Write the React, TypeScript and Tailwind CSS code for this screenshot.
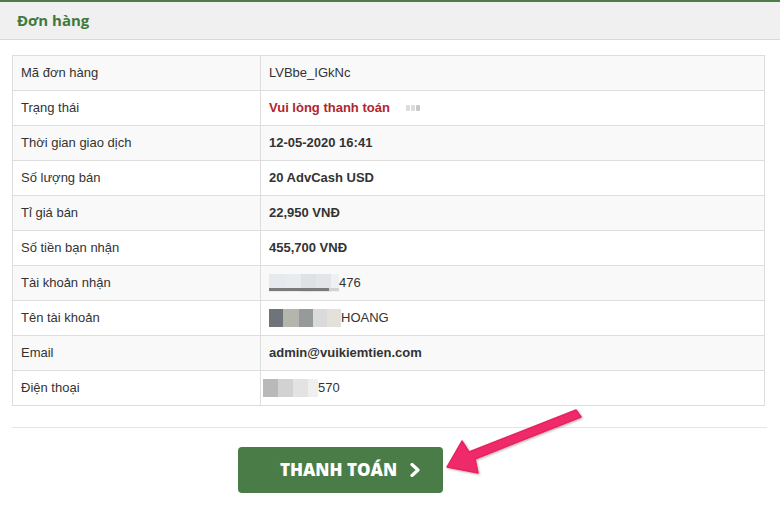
import React from 'react'

type Row = { label: string; value: React.ReactNode }

const Blur = ({ w, shades }: { w: number[]; shades: string[] }) => (
  <span className="inline-flex items-center h-[18px] align-middle">
    {w.map((width, i) => (
      <span key={i} className="h-[18px] inline-block" style={{ width, background: shades[i] }} />
    ))}
  </span>
)

const App: React.FC = () => {
  const rows: Row[] = [
    { label: 'Mã đơn hàng', value: <span className="font-normal">LVBbe_IGkNc</span> },
    {
      label: 'Trạng thái',
      value: (
        <span className="flex items-center">
          <span className="text-[#b0262b]">Vui lòng thanh toán</span>
          <span className="ml-4 flex gap-[1px]">
            <span className="w-[4px] h-[6px] bg-[#dcdcdc] rounded-[1px]" />
            <span className="w-[4px] h-[6px] bg-[#dcdcdc] rounded-[1px]" />
            <span className="w-[4px] h-[6px] bg-[#c8c8c8] rounded-[1px]" />
          </span>
        </span>
      )
    },
    { label: 'Thời gian giao dịch', value: '12-05-2020 16:41' },
    { label: 'Số lượng bán', value: '20 AdvCash USD' },
    { label: 'Tỉ giá bán', value: '22,950 VNĐ' },
    { label: 'Số tiền bạn nhận', value: '455,700 VNĐ' },
    {
      label: 'Tài khoản nhận',
      value: (
        <span className="flex items-center font-normal">
          <span className="relative inline-flex">
            <Blur w={[16, 16, 15, 15, 8]} shades={['#e6eaee', '#e9ecef', '#dfe2e5', '#e3e5e8', '#eef0f2']} />
            <span className="absolute left-0 bottom-[1px] w-[60px] h-[3px] bg-[#7a7a7a]" />
            <span className="absolute left-[60px] bottom-[1px] w-[10px] h-[3px] bg-[#cfd3d8]" />
          </span>
          <span>476</span>
        </span>
      )
    },
    {
      label: 'Tên tài khoản',
      value: (
        <span className="flex items-center font-normal">
          <Blur w={[14, 16, 14, 14, 14]} shades={['#6e7479', '#b4b6ae', '#979a9a', '#dadadb', '#e4e1db']} />
          <span>HOANG</span>
        </span>
      )
    },
    { label: 'Email', value: 'admin@vuikiemtien.com' },
    {
      label: 'Điện thoại',
      value: (
        <span className="flex items-center font-normal -ml-[6px]">
          <Blur w={[15, 15, 15, 10]} shades={['#b9b9b9', '#d2d2d2', '#e3e3e3', '#efefef']} />
          <span>570</span>
        </span>
      )
    }
  ]

  return (
    <div className="w-[780px] h-[510px] bg-white relative overflow-hidden" style={{ fontFamily: '"Liberation Sans", Arial, sans-serif' }}>
      {/* Header */}
      <div className="border-t-2 border-[#4d7d4b] bg-[#f0f0f0] border-b border-b-[#d9d9d9] h-[40px] flex items-center px-[17px]">
        <h2 className="text-[15px] font-bold text-[#3f7a3d]" style={{ fontFamily: '"Open Sans", sans-serif' }}>
          Đơn hàng
        </h2>
      </div>

      <div className="px-[12px] pt-[15px] w-[768px]">
        <table className="w-[753px] border-collapse text-[13px] text-[#333]">
          <tbody>
            {rows.map((row, i) => (
              <tr key={i} className={i % 2 === 0 ? 'bg-[#f9f9f9]' : 'bg-white'}>
                <td className="w-[248px] h-[35px] border border-[#dddddd] pl-[8px]">{row.label}</td>
                <td className="h-[35px] border border-[#dddddd] pl-[8px] font-bold">{row.value}</td>
              </tr>
            ))}
          </tbody>
        </table>

        <div className="mt-[21px] border-t border-[#e5e5e5] w-[755px]" />

        <div className="flex justify-center pt-[19px] pr-[8px]">
          <button
            className="ml-[-79px] w-[205px] h-[46px] rounded-[4px] bg-[#4a7c48] text-white text-[17px] font-extrabold flex items-center justify-center gap-[12px] pl-[20px]"
            style={{ fontFamily: '"Open Sans", sans-serif' }}
          >
            THANH TOÁN
            <svg width="12" height="14" viewBox="0 0 12 14" fill="none">
              <path d="M3 1.5 L9 7 L3 12.5" stroke="white" strokeWidth="3.2" strokeLinecap="round" strokeLinejoin="round" />
            </svg>
          </button>
        </div>
      </div>

      {/* Pink arrow annotation */}
      <svg className="absolute left-0 top-0 pointer-events-none" width="780" height="510">
        <defs>
          <filter id="sh" x="-10%" y="-10%" width="120%" height="120%">
            <feDropShadow dx="1" dy="1" stdDeviation="1.2" floodColor="#000" floodOpacity="0.3" />
          </filter>
        </defs>
        <path
          d="M576 410 L581 417 L475 459 L478 473 L447 467 L462 441 L469 452 Z"
          fill="#ef2a6a"
          stroke="#e8225f"
          strokeWidth="1.5"
          strokeLinejoin="round"
          filter="url(#sh)"
        />
      </svg>
    </div>
  )
}

export default App
